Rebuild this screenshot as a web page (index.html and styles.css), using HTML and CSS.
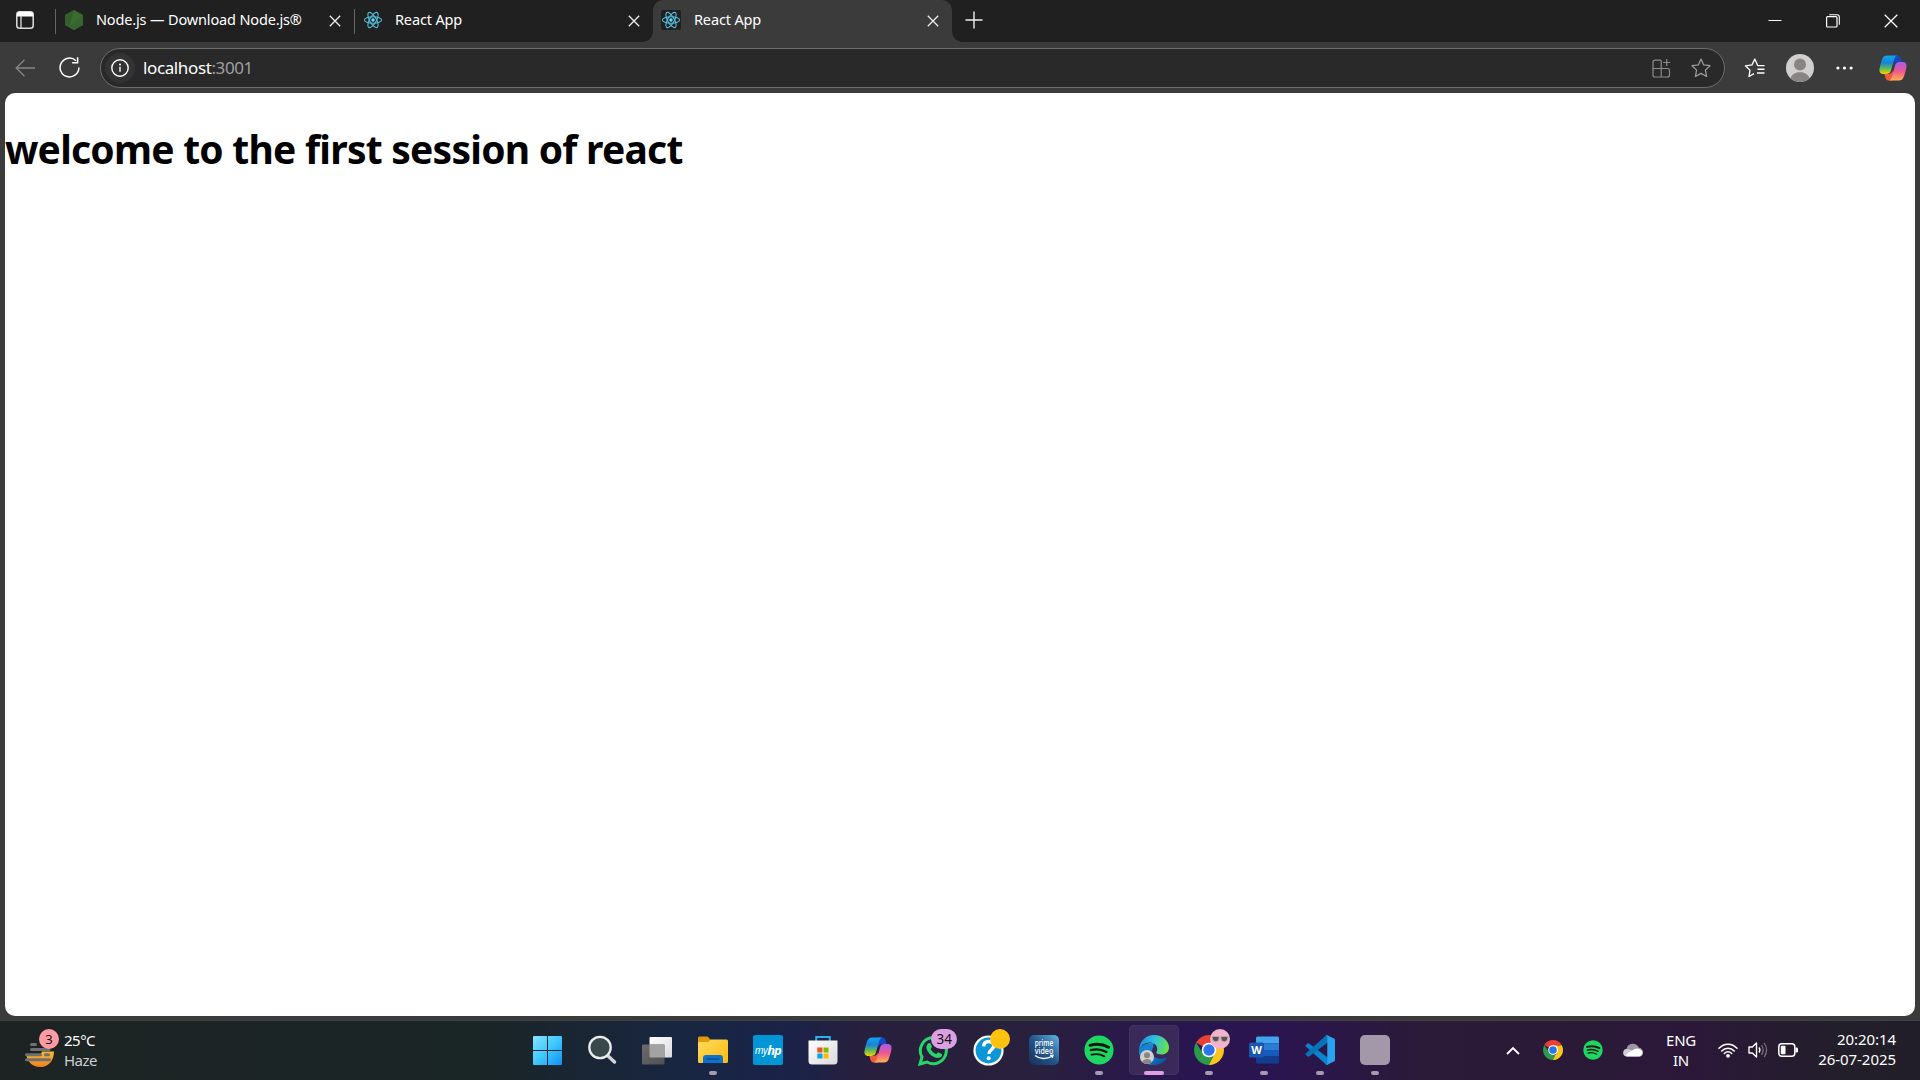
FILE: index.html
```html
<!DOCTYPE html>
<html lang="en">
<head>
<meta charset="utf-8">
<title>React App</title>
<link rel="stylesheet" href="styles.css">
</head>
<body>
<svg class="defs" width="0" height="0" aria-hidden="true">
  <defs>
    <linearGradient id="cpA" x1="0" y1="0" x2="0" y2="1"><stop offset="0" stop-color="#12a5f0"/><stop offset=".4" stop-color="#1783d8"/><stop offset=".7" stop-color="#5fb95c"/><stop offset="1" stop-color="#f3d000"/></linearGradient>
    <linearGradient id="cpB" x1="0" y1="0" x2="0" y2="1"><stop offset="0" stop-color="#a45bf0"/><stop offset=".5" stop-color="#f0578f"/><stop offset="1" stop-color="#ffb14d"/></linearGradient>
    <linearGradient id="win" gradientUnits="userSpaceOnUse" x1="0" y1="0" x2="29" y2="29"><stop offset="0" stop-color="#86e5ff"/><stop offset=".5" stop-color="#3fc8ff"/><stop offset="1" stop-color="#0d92f5"/></linearGradient>
    <linearGradient id="folder" x1="0" y1="0" x2="1" y2="1"><stop offset="0" stop-color="#ffdc5f"/><stop offset="1" stop-color="#fbb90f"/></linearGradient>
    <linearGradient id="light" x1="0" y1="0" x2="1" y2="1"><stop offset="0" stop-color="#fff"/><stop offset="1" stop-color="#dadada"/></linearGradient>
    <linearGradient id="gray" x1="0" y1="0" x2="1" y2="1"><stop offset="0" stop-color="#6c6c6c"/><stop offset="1" stop-color="#505050"/></linearGradient>
    <linearGradient id="prime" x1="0" y1="1" x2="1" y2="0"><stop offset="0" stop-color="#1b2f55"/><stop offset=".5" stop-color="#22568c"/><stop offset="1" stop-color="#65b5e5"/></linearGradient>
    <linearGradient id="edgeTop" x1="0" y1=".3" x2="1" y2=".5"><stop offset="0" stop-color="#1b8fdc"/><stop offset=".5" stop-color="#2fc0dc"/><stop offset="1" stop-color="#69e33f"/></linearGradient>
    <linearGradient id="edgeLow" x1="0" y1="0" x2="1" y2="1"><stop offset="0" stop-color="#1b9de2"/><stop offset="1" stop-color="#0b4f9e"/></linearGradient>
    <linearGradient id="sun" x1="0" y1="0" x2="0" y2="1"><stop offset="0" stop-color="#f7b733"/><stop offset="1" stop-color="#f5821f"/></linearGradient>
    <symbol id="close" viewBox="0 0 12 12"><path d="M.8.8l10.4 10.4M11.2.8L.8 11.2" stroke="#eee" stroke-width="1.3" fill="none"/></symbol>
    <symbol id="react" viewBox="-10 -10 20 20"><g fill="none" stroke="#52c1de" stroke-width="1.1"><ellipse rx="8.6" ry="3.3"/><ellipse rx="8.6" ry="3.3" transform="rotate(60)"/><ellipse rx="8.6" ry="3.3" transform="rotate(120)"/></g><circle r="1.7" fill="#6fd9f2"/></symbol>
    <symbol id="copilot" viewBox="0 0 28 26">
      <path d="M14 .5h4.5c2 0 2.7 1.600 3.200 3.300l1 3.300h-4.500c-2.500 0-3.600 1.500-4.200 3.500z" fill="#1747c7"/>
      <path d="M13.800 25.500H9.700c-2 0-2.900-1.500-3.400-3.300l-1-3.300h4.500c2.400 0 3.500-1.600 4.200-3.600z" fill="#ef5a3c"/>
      <path d="M8 .5h10c-1.800.6-2.400 2.400-3 4.500l-3 10.300c-.7 2.300-1.700 3.600-4.300 3.600H4.500C.8 18.900 0 16.200.6 13.400 1.300 9.800 2.400 6 3.500 3.500 4.300 1.500 5.800.5 8 .5z" fill="url(#cpA)"/>
      <path d="M20 25.500H10c1.800-.6 2.400-2.400 3-4.500l3-10.300c.7-2.300 1.700-3.600 4.300-3.600h3.200c3.700 0 4.500 2.700 3.900 5.500-.7 3.600-1.800 7.400-2.900 9.900-.8 2-2.300 3-4.500 3z" fill="url(#cpB)"/>
    </symbol>
    <symbol id="chrome" viewBox="0 0 30 30">
      <path d="M15 15L2.010 7.500A15 15 0 0 1 27.990 7.500L21 8.200z" fill="#ea3f33"/>
      <path d="M15 15L27.990 7.500A15 15 0 0 1 15 30L21 18z" fill="#fcc41c"/>
      <path d="M15 15L9 18.400 2.010 7.500A15 15 0 0 0 15 30l6-11.500z" fill="#2b9a4b"/>
      <path d="M15 8.200h12.600A15 15 0 0 1 15 30l6-11.600z" fill="#fcc41c"/>
      <circle cx="15" cy="15" r="7.300" fill="#fff"/><circle cx="15" cy="15" r="5.700" fill="#2a75ee"/>
    </symbol>
    <symbol id="spotify" viewBox="0 0 30 30"><circle cx="15" cy="15" r="14.600" fill="#1ed760"/><g fill="none" stroke="#101712" stroke-linecap="round"><path d="M6 10.300c6-1.700 13-1.200 18.600 1.900" stroke-width="2.900"/><path d="M6.800 15.100c5.200-1.400 11-.8 15.700 1.900" stroke-width="2.300"/><path d="M7.500 19.700c4.300-1.100 9-.6 12.900 1.600" stroke-width="1.900"/></g></symbol>
    <symbol id="person" viewBox="0 0 28 28"><circle cx="14" cy="14" r="14" fill="#d2d0ce"/><circle cx="14" cy="10.500" r="6" fill="#8a8482"/><path d="M4.500 24.200C6 19.900 9.700 18.200 14 18.200s8 1.700 9.500 6A14 14 0 0 1 4.500 24.200z" fill="#8a8482"/></symbol>
  </defs>
</svg>

<header class="tabstrip">
  <div class="workspaces"><svg width="18" height="18" viewBox="0 0 18 18"><rect x=".8" y=".8" width="16.400" height="16.400" rx="2.800" fill="none" stroke="#ddd" stroke-width="1.500"/><path d="M1 5.500V3.500A2.500 2.500 0 0 1 3.500 1h11A2.500 2.500 0 0 1 17 3.500v2z" fill="#fff"/><path d="M5 5v12" stroke="#ddd" stroke-width="1.300"/></svg></div>
  <div class="tab tab-divided">
    <svg class="favicon" viewBox="0 0 20 20"><path d="M10 0l9 5v10l-9 5-9-5V5z" fill="#3c6b30"/><path d="M10 0L1 5v10l4 2.200z" fill="#335d2b"/><path d="M19 5v10l-9 5-5-2.800z" fill="#376430"/></svg>
    <span class="tab-title tab-title-node">Node.js — Download Node.js®</span>
    <svg class="tab-close"><use href="#close"/></svg>
  </div>
  <div class="tab tab-divided">
    <svg class="favicon"><use href="#react"/></svg>
    <span class="tab-title">React App</span>
    <svg class="tab-close"><use href="#close"/></svg>
  </div>
  <div class="tab tab-active">
    <svg class="favicon favicon-boxed"><use href="#react"/></svg>
    <span class="tab-title">React App</span>
    <svg class="tab-close"><use href="#close"/></svg>
  </div>
  <svg class="new-tab" width="18" height="18" viewBox="0 0 18 18"><path d="M9 .5v17M.5 9h17" stroke="#eee" stroke-width="1.400"/></svg>
  <div class="window-controls">
    <span><svg width="14" height="14" viewBox="0 0 14 14"><path d="M.5 6.500h13" stroke="#fff"/></svg></span>
    <span><svg width="14" height="14" viewBox="0 0 14 14"><rect x=".6" y="2.600" width="10.400" height="10.400" rx="1" fill="none" stroke="#fff" stroke-width="1.200"/><path d="M3.200.7H11A2.300 2.300 0 0 1 13.300 3v7.800" fill="none" stroke="#fff" stroke-width="1.100"/></svg></span>
    <span><svg width="14" height="14" viewBox="0 0 14 14"><path d="M.7.7l12.600 12.600M13.300.7L.7 13.300" stroke="#fff" stroke-width="1.300"/></svg></span>
  </div>
</header>

<nav class="toolbar">
  <svg class="back" width="21" height="18" viewBox="0 0 21 18"><path d="M9.500.8L1.200 9l8.300 8.200M1.200 9H20" fill="none" stroke="#858585" stroke-width="1.300"/></svg>
  <svg class="reload" width="21" height="21" viewBox="0 0 21 21"><path d="M17 3.700A9.400 9.400 0 1 0 19.900 10.500" fill="none" stroke="#fff" stroke-width="1.500"/><path d="M18.600.3v5.500h-5.500" fill="none" stroke="#fff" stroke-width="1.500"/></svg>
  <div class="address">
    <span class="site-info"><svg width="18" height="18" viewBox="0 0 18 18"><circle cx="9" cy="9" r="8.200" fill="none" stroke="#fff" stroke-width="1.400"/><path d="M9 7.800v5" stroke="#fff" stroke-width="1.400"/><circle cx="9" cy="5.500" r="1" fill="#fff"/></svg></span>
    <span class="url">localhost<span class="port">:3001</span></span>
    <svg class="apps" width="19" height="19" viewBox="0 0 19 19"><path d="M9 1.200H3a2 2 0 0 0-2 2V16a2 2 0 0 0 2 2h12.500a2 2 0 0 0 2-2v-4.500a2 2 0 0 0-2-2H1M9.200 1.200V18M14.700 0v7M11.200 3.500h7" fill="none" stroke="#8c8c8c" stroke-width="1.200"/></svg>
    <svg class="star" width="20" height="20" viewBox="0 0 20 20"><path d="M10 1.100l2.700 5.800 6.300.8-4.600 4.400 1.200 6.400L10 15.400l-5.600 3.100 1.200-6.400L1 7.700l6.300-.8z" fill="none" stroke="#9a9a9a" stroke-width="1.300" stroke-linejoin="round"/></svg>
  </div>
  <div class="actions">
    <svg width="21" height="20" viewBox="0 0 21 20"><path d="M20.500 7.600h-6.800L10.800 1 8 6.900l-6.600.9L6 12.200l-1 6.300 5-2.900" fill="none" stroke="#fff" stroke-width="1.300" stroke-linejoin="round"/><path d="M13.500 11.300h7M13 15h7.500" stroke="#fff" stroke-width="1.400"/></svg>
    <svg class="avatar" width="28" height="28"><use href="#person"/></svg>
    <svg width="17" height="4" viewBox="0 0 17 4"><g fill="#fff"><circle cx="1.900" cy="2" r="1.600"/><circle cx="8.500" cy="2" r="1.600"/><circle cx="15.100" cy="2" r="1.600"/></g></svg>
    <svg width="28" height="26"><use href="#copilot"/></svg>
  </div>
</nav>

<main class="page"><h1>welcome to the first session of react</h1></main>

<footer class="taskbar">
  <div class="weather">
    <div class="weather-icon">
      <svg width="30" height="30" viewBox="0 0 30 24"><path d="M1.500 13H15l2-4.500h12C29 17 24 24 15.500 24 8 24 3 19.500 1.500 13z" fill="url(#sun)"/><g stroke="#6e7072" stroke-width="3" stroke-linecap="round"><path d="M6.500 1.500h4M6.500 6.500H24M1.500 11.700h14M20.500 11.700h3M1.500 16.700h23"/></g></svg>
      <span class="weather-badge">3</span>
    </div>
    <div class="weather-text"><span class="temp">25°C</span><span class="cond">Haze</span></div>
  </div>

  <div class="apps-row">
    <span class="app"><svg width="29" height="29" viewBox="0 0 29 29"><path d="M1 0h13v14H0V1a1 1 0 0 1 1-1zM15 0h13a1 1 0 0 1 1 1v13H15zM0 15h14v14H1a1 1 0 0 1-1-1zM15 15h14v13a1 1 0 0 1-1 1H15z" fill="url(#win)"/></svg></span>
    <span class="app"><svg width="30" height="30" viewBox="0 0 30 30"><path d="M20 20l7.500 7" stroke="#d2d6d9" stroke-width="3.400" stroke-linecap="round"/><circle cx="13" cy="12.500" r="10.700" fill="#3a474b" stroke="#ececec" stroke-width="2.300"/></svg></span>
    <span class="app"><svg width="30" height="29" viewBox="0 0 30 29"><rect x="7.500" y="1" width="22.500" height="20.500" rx="1" fill="url(#light)"/><rect x="0" y="8.500" width="22.500" height="20" rx="1" fill="url(#gray)"/><path d="M7.500 8.500h15v13H8.500a1 1 0 0 1-1-1z" fill="#a3a3a3"/></svg></span>
    <span class="app running"><svg width="30" height="28" viewBox="0 0 30 28"><path d="M0 7V2a1.500 1.500 0 0 1 1.500-1.500h8L13 4v4H0z" fill="#e29a06"/><path d="M0 6h10l3-2.500h15.500A1.500 1.500 0 0 1 30 5v20.500a1.500 1.500 0 0 1-1.500 1.500H1.500A1.500 1.500 0 0 1 0 25.500z" fill="url(#folder)"/><path d="M5 27v-5a3 3 0 0 1 3-3h14a3 3 0 0 1 3 3v5z" fill="#0f72c9"/><path d="M8.500 23h13" stroke="#0a4b91" stroke-width="1.400"/></svg></span>
    <span class="app"><span class="myhp"><i>my</i><b>hp</b></span></span>
    <span class="app"><svg width="30" height="30" viewBox="0 0 30 30"><path d="M8.200 7V2h13.600v5" fill="none" stroke="#25b5ea" stroke-width="2"/><path d="M.5 5.500h29V26a3.500 3.500 0 0 1-3.500 3.500H4A3.500 3.500 0 0 1 .5 26z" fill="url(#light)"/><path d="M9.300 12.500h5.200v5H9.300z" fill="#f25022"/><path d="M15.500 12.500h5v5h-5z" fill="#7fba00"/><path d="M9.300 18.500h5.200v5H9.300z" fill="#00a4ef"/><path d="M15.500 18.500h5v5h-5z" fill="#ffb900"/></svg></span>
    <span class="app"><svg width="28" height="26"><use href="#copilot"/></svg></span>
    <span class="app"><svg width="31" height="31" viewBox="0 0 31 31"><path d="M2 29l2-7A13 13 0 1 1 9 27z" fill="none" stroke="#29d568" stroke-width="3"/><path d="M10 8.500c1-.9 2.200-.7 2.700.3l1.200 2.700c.3.700-.9 2-1.300 2.500 1.300 2.600 3.200 4.200 5.700 5.300.8-.9 1.500-2.200 2.300-1.900l2.800 1.300c1 .5.800 1.900 0 2.900-1.800 2-4.700 1.800-7.900.2-3.500-1.800-6.300-5.300-7-8.300-.4-2 .3-3.900 1.500-5z" fill="#29d568"/></svg><span class="count">34</span></span>
    <span class="app"><svg width="31" height="31" viewBox="0 0 31 31"><circle cx="15.500" cy="15.500" r="14" fill="#0c96d8" stroke="#fff" stroke-width="2.200"/><path d="M10.700 11.300c.2-3.400 2.200-4.800 5-4.800s5 1.700 5 4.400c0 3.600-4.900 4-4.900 8" fill="none" stroke="#fff" stroke-width="3.300"/><circle cx="15.700" cy="23.300" r="2" fill="#fff"/></svg><span class="dot-badge"></span></span>
    <span class="app"><svg width="30" height="30" viewBox="0 0 30 30"><rect width="30" height="30" rx="5" fill="url(#prime)"/><text class="prime-text" x="15" y="11" textLength="18.500" lengthAdjust="spacingAndGlyphs">prime</text><text class="prime-text" x="15" y="18.500" textLength="18.500" lengthAdjust="spacingAndGlyphs">video</text><path d="M6 20.500c4.500 3.700 11.500 4 17.200.8M21 20.300l3-.2-.7 2.700" fill="none" stroke="#eaf6ff" stroke-width="1.300"/></svg></span>
    <span class="app running"><svg width="30" height="30"><use href="#spotify"/></svg></span>
    <span class="app running focused"><svg width="30" height="30" viewBox="0 0 30 30"><path d="M15 8C8 7 1 11 0 16c0 8 7 14 15 14 6 0 10-3 12.500-6.500.4-.7-.2-1-.9-.7C20 26 12 21.500 13 15.500z" fill="url(#edgeLow)"/><path d="M9 9C4 10 .8 12.500 0 16c.3 7.500 6 13.300 13 14-5-4-6-9-3-14 1-2 3-3.500 5-4z" fill="#1583cf"/><path d="M0 15C.5 6 7 0 15 0c8.500 0 15 6 15 12.500 0 4.500-3.500 7-7.500 7-3.300 0-5.200-1-5.200-2 0-.8 1-1.300 1-3.500C18 10 15 7.500 10.500 7.500 5.500 7.500 1.500 10.500 0 15z" fill="url(#edgeTop)"/></svg><svg class="profile-badge" width="14" height="14"><use href="#person"/></svg></span>
    <span class="app running"><svg width="30" height="30"><use href="#chrome"/></svg><svg class="cool-badge" width="20" height="20" viewBox="0 0 20 20"><circle cx="10" cy="10" r="10" fill="#f3b3cb"/><g fill="#5a5257" stroke="#b5a4aa"><path d="M2 7.500h7v2.500a3.300 3.300 0 0 1-6.500 0zM11 7.500h7l-.5 2.500a3.300 3.300 0 0 1-6.500 0z"/></g></svg></span>
    <span class="app running"><svg width="30" height="28" viewBox="0 0 30 28"><path d="M7 2a1.500 1.500 0 0 1 1.500-1.500h20A1.500 1.500 0 0 1 30 2v5.500H7z" fill="#41a5ee"/><path d="M7 7.500h23V14H7z" fill="#2b7cd3"/><path d="M7 14h23v6.500H7z" fill="#185abd"/><path d="M7 20.500h23V26a1.500 1.500 0 0 1-1.500 1.500h-20A1.500 1.500 0 0 1 7 26z" fill="#103f91"/><rect y="6.500" width="15" height="15" rx="1.500" fill="#1a55b2"/><text class="word-text" x="7.500" y="18">W</text></svg></span>
    <span class="app running"><svg width="30" height="30" viewBox="0 0 30 30"><path d="M.7 10.300L2.500 8.600q.7-.6 1.600 0L24 23.500V29L21.500 30 .8 11.500q-.6-.6-.1-1.200z" fill="#0b83cf"/><path d="M.7 19.700l1.800 1.700q.7.600 1.600 0L24 6.500V1L21.500 0 .8 18.500q-.6.600-.1 1.200z" fill="#0873b9"/><path d="M22 .2l7 3.200a1.700 1.700 0 0 1 1 1.500V25a1.700 1.700 0 0 1-1 1.500l-7 3.300q-1 .3-1.700-.4 2 .6 2-1.400V2q0-2-2-1.400.7-.7 1.700-.4z" fill="#2ba2ee"/></svg></span>
    <span class="app running"><span class="blank-app"></span></span>
  </div>

  <div class="tray">
    <svg class="chevron" width="14" height="9" viewBox="0 0 14 9"><path d="M1 8l6-6 6 6" fill="none" stroke="#fff" stroke-width="1.900"/></svg>
    <svg width="20" height="20"><use href="#chrome"/></svg>
    <svg width="20" height="20"><use href="#spotify"/></svg>
    <svg width="20" height="14" viewBox="0 0 20 14"><path d="M4 13.500a4 4 0 0 1-.5-7.800A6.500 6.500 0 0 1 15.700 4.500 5 5 0 0 1 18 13.500z" fill="#9b97a2"/><path d="M4 13.500a3.800 3.800 0 0 1 0-7.600c2.300 0 3.500.8 6 2z" fill="#d0ced4"/><path d="M4.500 13.500C2.500 13 3 11 5 10l5.500-3.200a6 6 0 0 1 7-.3 3.800 3.800 0 0 1-1 7z" fill="#fff"/></svg>
    <div class="lang"><span>ENG</span><span>IN</span></div>
    <svg class="wifi" width="20" height="16" viewBox="0 0 20 16"><g fill="none" stroke="#fff" stroke-width="1.500" stroke-linecap="round"><path d="M1 6.300c5-5.400 13-5.400 18 0M3.700 9c3.500-3.700 9.100-3.700 12.600 0M6.300 11.500c2.100-2.200 5.300-2.200 7.400 0"/></g><circle cx="10" cy="13.800" r="1.900" fill="#fff"/></svg>
    <svg class="volume" width="20" height="18" viewBox="0 0 20 18"><path d="M1 6h3.300L8.500 2v14l-4.200-4H1z" fill="none" stroke="#fff" stroke-width="1.400" stroke-linejoin="round"/><path d="M11 6.500q1.800 2.500 0 5" fill="none" stroke="#fff" stroke-width="1.400"/><path d="M13.500 4.200q3.400 4.800 0 9.600M16.200 2q4.800 7 0 14" fill="none" stroke="#77717f" stroke-width="1.300"/></svg>
    <svg class="battery" width="20" height="14" viewBox="0 0 20 14"><rect x=".8" y=".8" width="16" height="12.400" rx="3" fill="none" stroke="#fff" stroke-width="1.500"/><rect x="2.800" y="2.800" width="4.700" height="8.400" rx="1" fill="#fff"/><path d="M17.500 4.500h1.200a1.300 1.300 0 0 1 1.300 1.300v2.400a1.300 1.300 0 0 1-1.300 1.300h-1.200z" fill="#fff"/></svg>
    <div class="clock"><span class="time">20:20:14</span><span class="date">26-07-2025</span></div>
  </div>
</footer>
</body>
</html>
```

FILE: styles.css
```css
* { box-sizing: border-box; }

body {
  margin: 0;
  width: 1920px;
  height: 1080px;
  overflow: hidden;
  display: flex;
  flex-direction: column;
  background: #3b3b3b;
  color: #fff;
  font-family: "Noto Sans", "Open Sans", sans-serif;
}

svg { display: block; flex: none; }
.defs { position: absolute; }

/* Tab strip */
.tabstrip {
  display: flex;
  height: 42px;
  flex: none;
  background: #202020;
}
.workspaces { width: 55px; padding: 11px 0 0 16px; }
.tab {
  width: 299px;
  display: flex;
  align-items: center;
  padding: 0 13px 2px 9px;
}
.tab-divided {
  background: linear-gradient(#666, #666) 0 9px / 1px 25px no-repeat;
}
.tab-active {
  position: relative;
  background: #3b3b3b;
  border-radius: 10px 10px 0 0;
  padding-left: 8px;
}
.tab-active::before, .tab-active::after {
  content: "";
  position: absolute;
  bottom: 0;
  width: 10px;
  height: 10px;
}
.tab-active::before { left: -10px; background: radial-gradient(circle at 0 0, transparent 9.500px, #3b3b3b 10px); }
.tab-active::after { right: -10px; background: radial-gradient(circle at 100% 0, transparent 9.500px, #3b3b3b 10px); }
.favicon { width: 20px; height: 20px; }
.favicon-boxed { background: #202020; border-radius: 2px; }
.tab-title {
  flex: 1;
  margin-left: 12px;
  font-size: 14.500px;
  line-height: 20px;
  letter-spacing: -0.150px;
  white-space: nowrap;
  padding-bottom: 2px;
}
.tab-active .tab-title { margin-left: 13px; }
.tab-close { width: 12px; height: 12px; margin-top: 2px; }
.new-tab { margin: 11px 0 0 13px; }
.window-controls { display: flex; margin-left: auto; height: 42px; }
.window-controls span { width: 58px; display: flex; align-items: center; justify-content: center; }

/* Toolbar */
.toolbar {
  height: 51px;
  flex: none;
  display: flex;
  align-items: center;
  padding-left: 15px;
}
.back { margin-right: 23px; }
.address {
  width: 1625px;
  height: 40px;
  margin: 1px 0 0 20px;
  padding: 0 13px 0 4px;
  display: flex;
  align-items: center;
  border: 1px solid #6d6d6d;
  border-radius: 20px;
  background: #292929;
}
.site-info {
  width: 30px;
  height: 30px;
  border-radius: 50%;
  background: #333;
  display: flex;
  align-items: center;
  justify-content: center;
}
.url { flex: 1; margin-left: 8px; font-size: 17px; line-height: 24px; letter-spacing: -0.380px; }
.port { color: #a0a0a0; }
.star { margin-left: 20px; }
.actions { display: flex; align-items: center; gap: 21px; margin-left: 19px; }
.actions svg:nth-child(3) { margin-left: 1px; }
.actions svg:nth-child(4) { margin-left: 5px; }

/* Page */
.page {
  height: 923px;
  flex: none;
  margin: 0 5px 4px;
  border-radius: 10px;
  background: #fff;
  color: #000;
  overflow: hidden;
}
.page h1 {
  margin: 29px 0 0;
  font-size: 39px;
  line-height: 54px;
  letter-spacing: -0.760px;
  white-space: nowrap;
}

/* Taskbar */
.taskbar {
  height: 60px;
  flex: none;
  display: grid;
  grid-template-columns: 522px 878px 520px;
  align-items: center;
  padding-bottom: 1px;
  border-top: 1px solid #3d4142;
  background: linear-gradient(90deg, #1d2323 0, #1a2526 480px, #182642 690px, #1a2248 790px, #281f3c 870px, #29203e 1040px, #29164f 1160px, #2b1550 1280px, #2b1a38 1420px, #2b1838 1700px, #221e2a 1840px, #211e29 1920px);
}
.weather { display: flex; padding-left: 25px; gap: 9px; }
.weather-icon { position: relative; width: 30px; padding-top: 9px; }
.weather-badge {
  position: absolute;
  left: 14px;
  top: -2px;
  width: 20px;
  height: 20px;
  border-radius: 50%;
  background: #ff99a4;
  color: #111;
  font-size: 13px;
  line-height: 20px;
  text-align: center;
}
.weather-text, .clock, .lang { display: flex; flex-direction: column; font-size: 15px; line-height: 20px; }
.weather-text { letter-spacing: -0.500px; margin-top: -1px; }
.cond { color: #cfcfcf; }

.apps-row { display: flex; justify-content: space-between; }
.app {
  position: relative;
  width: 50px;
  height: 50px;
  display: flex;
  align-items: center;
  justify-content: center;
}
.running::after {
  content: "";
  position: absolute;
  left: 21px;
  bottom: 0;
  width: 8px;
  height: 4px;
  border-radius: 2px;
  background: #a49bb0;
}
.focused { border-radius: 5px; background: #3a2a5a; box-shadow: inset 0 0 0 1px #43345f; }
.focused::after { left: 15px; width: 20px; background: #dd9fe3; }
.myhp {
  width: 30px;
  height: 30px;
  border-radius: 2px;
  background: #0096d6;
  display: flex;
  align-items: center;
  justify-content: center;
  font-size: 10px;
  letter-spacing: -0.500px;
  font-style: italic;
}
.myhp b { font-size: 13px; letter-spacing: -1px; }
.count, .dot-badge {
  position: absolute;
  top: 4px;
  height: 20px;
  border-radius: 10px;
}
.count {
  left: 23px;
  width: 26px;
  background: #dd9fe3;
  color: #111;
  font-size: 13.500px;
  line-height: 20px;
  text-align: center;
}
.dot-badge { left: 26px; width: 20px; background: #ffc20e; }
.prime-text { font: 600 8px "Open Sans", sans-serif; fill: #fff; text-anchor: middle; }
.word-text { font: 700 11px "Noto Sans", sans-serif; fill: #fff; text-anchor: middle; }
.profile-badge { position: absolute; left: 11px; top: 25px; }
.cool-badge { position: absolute; left: 26px; top: 4px; }
.blank-app { width: 30px; height: 30px; border-radius: 5px; background: #a298aa; }

.tray { display: flex; align-items: center; padding-left: 106px; gap: 20px; }
.chevron { margin-right: 3px; }
.lang { width: 30px; align-items: center; margin-left: 3px; letter-spacing: -0.300px; }
.wifi { margin-left: 2px; }
.volume { margin-left: -10px; }
.battery { margin-left: -10px; }
.clock { margin-left: auto; margin-right: 24px; margin-top: -2px; align-items: flex-end; letter-spacing: -0.050px; }
```
